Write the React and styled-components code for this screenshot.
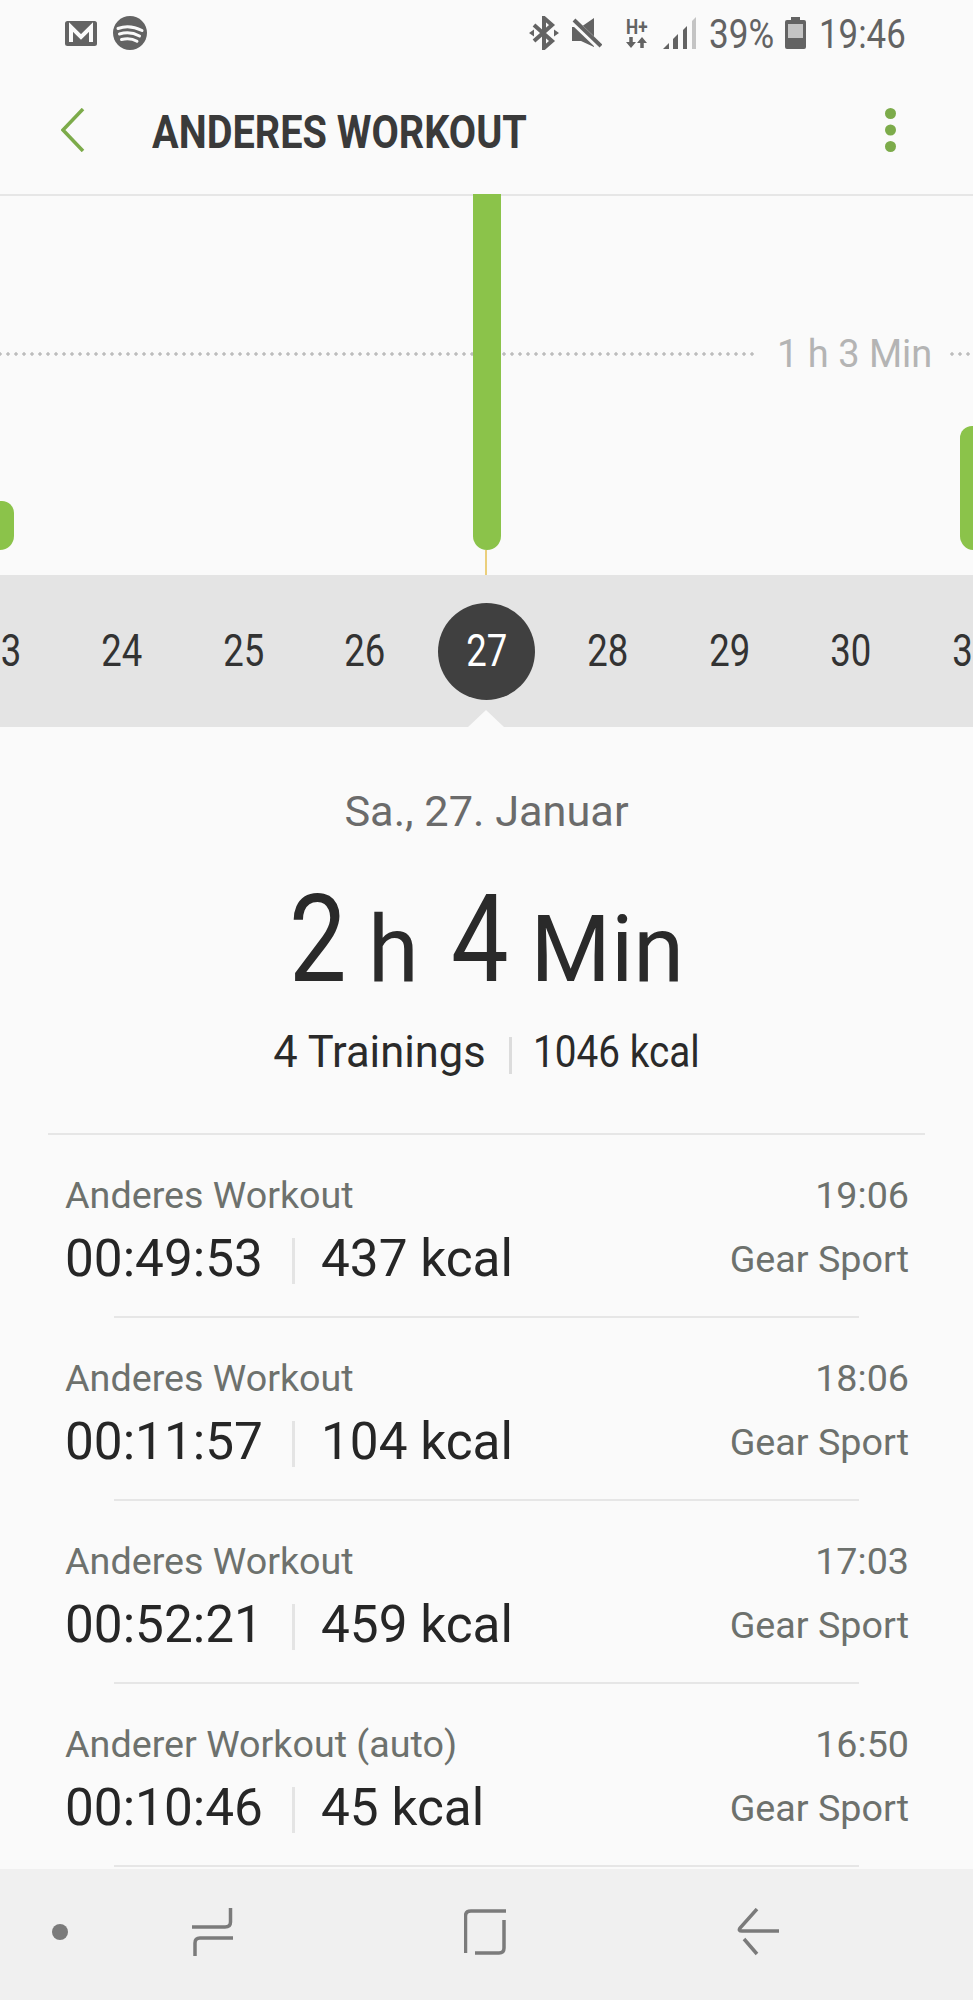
import React from "react";
import styled, { createGlobalStyle } from "styled-components";

const GlobalStyle = createGlobalStyle`
  html, body {
    margin: 0;
    background: #fafafa;
    font-family: Roboto, "Liberation Sans", sans-serif;
  }
  * {
    box-sizing: border-box;
  }
`;

const Page = styled.div`
  width: 973px;
  height: 2000px;
  display: flex;
  flex-direction: column;
  background: #fafafa;
  overflow: hidden;
`;

// Samsung's condensed Roboto is not installed, so text gets squeezed instead
const Squeeze = styled.span`
  display: inline-block;
  white-space: nowrap;
  width: ${p => (p.$w ? `${p.$w}px` : "auto")};
  transform: scaleX(${p => p.$x || 1});
  transform-origin: ${p => p.$origin || "left"} center;
`;

const StatusBar = styled.div`
  height: 66px;
  flex-shrink: 0;
  display: flex;
  align-items: center;
  padding: 0 67px 0 65px;
`;

const Notifications = styled.div`
  display: flex;
  align-items: center;
  gap: 16px;
  margin-right: auto;
`;

const StatusIcons = styled.div`
  display: flex;
  align-items: center;
  gap: 13px;
  color: #636363;
`;

const StatusText = styled.div`
  width: ${p => p.$w}px;
  font-size: 41px;
  line-height: 44px;
  color: #636363;
  margin-top: 2px;
`;

const NetworkSlot = styled.div`
  width: 24px;
  margin-left: 11px;
  display: flex;
  flex-direction: column;
  align-items: flex-start;
  gap: 1px;
`;

const NetworkLabel = styled.div`
  font-size: 20px;
  line-height: 18px;
  font-weight: 700;
  color: #636363;
`;

const Header = styled.div`
  height: 130px;
  flex-shrink: 0;
  display: flex;
  align-items: center;
  padding: 0 77px 0 61px;
  border-bottom: 2px solid #e6e6e6;
`;

const Title = styled.h1`
  margin: 3px auto 0 67px;
  font-size: 47px;
  line-height: 54px;
  font-weight: 700;
  color: #3a3a3a;
`;

const Chart = styled.div`
  position: relative;
  height: 379px;
  flex-shrink: 0;
`;

const Bar = styled.div`
  position: absolute;
  left: ${p => p.$left}px;
  top: ${p => p.$top}px;
  width: 28px;
  bottom: 25px;
  background: #8bc34a;
  border-radius: ${p => (p.$flat ? "0 0 14px 14px" : "12px 12px 14px 14px")};
`;

const Marker = styled.div`
  position: absolute;
  left: 485px;
  bottom: 0;
  width: 2px;
  height: 25px;
  background: #ebcf7c;
`;

const Dotted = styled.div`
  position: absolute;
  left: ${p => p.$left}px;
  width: ${p => p.$width}px;
  top: 156px;
  height: 4px;
  background-image: radial-gradient(circle at center, #bdbdbd 1.4px, transparent 2px);
  background-size: 8px 4px;
  background-position: ${p => p.$phase}px 0;
`;

const GoalLabel = styled.div`
  position: absolute;
  left: 777px;
  top: 133px;
  font-size: 38px;
  line-height: 50px;
  color: #b4b4b4;
`;

const DateStrip = styled.div`
  position: relative;
  height: 152px;
  flex-shrink: 0;
  display: flex;
  justify-content: center;
  align-items: center;
  background: #e4e4e4;
  overflow: hidden;
`;

const Day = styled.div`
  width: 121.5px;
  flex-shrink: 0;
  display: flex;
  justify-content: center;
`;

const Bubble = styled.div`
  width: 97px;
  height: 97px;
  border-radius: 50%;
  display: flex;
  align-items: center;
  justify-content: center;
  font-size: 44px;
  color: ${p => (p.$active ? "#fff" : "#333")};
  background: ${p => (p.$active ? "#404040" : "transparent")};
`;

const Pointer = styled.div`
  position: absolute;
  left: 468px;
  bottom: 0;
  border-left: 18px solid transparent;
  border-right: 18px solid transparent;
  border-bottom: 17px solid #fafafa;
`;

const Summary = styled.div`
  flex-shrink: 0;
  padding-top: 55px;
  text-align: center;
`;

const DateLine = styled.div`
  font-size: 43.3px;
  line-height: 60px;
  color: #6b6b6b;
`;

const Total = styled.div`
  margin-top: 33px;
  height: 130px;
  display: flex;
  justify-content: center;
  align-items: baseline;
  font-size: 122px;
  line-height: 130px;
  color: #2a2a2a;
`;

const Unit = styled.span`
  font-size: 92px;
  line-height: 1;
  margin: ${p => p.$margin};
`;

const Totals = styled.div`
  margin-top: 18px;
  display: flex;
  justify-content: center;
  align-items: center;
  font-size: 43.5px;
  line-height: 60px;
  color: #2a2a2a;
`;

const TotalsRule = styled.div`
  width: 3px;
  height: 37px;
  margin: 5px 21px 0 23px;
  background: #dcdcdc;
`;

const List = styled.div`
  flex: 1;
  margin: 50px 48px 0;
  border-top: 2px solid #e6e6e6;
  overflow: hidden;
`;

const Row = styled.div`
  height: 183px;
  padding-top: 35px;
  display: flex;
  flex-direction: column;
`;

const RowLine = styled.div`
  height: 50px;
  padding: 0 16px 0 17px;
  display: flex;
  align-items: center;
  justify-content: space-between;
`;

const RowGap = styled.div`
  height: 14px;
`;

const Muted = styled.div`
  font-size: 37.7px;
  line-height: 50px;
  color: #6d716d;
`;

const Values = styled.div`
  display: flex;
  align-items: center;
  font-size: 51.3px;
  line-height: 50px;
  color: #262626;
`;

const Duration = styled.div`
  width: 227px;
`;

const ValueRule = styled.div`
  width: 3px;
  height: 46px;
  margin: 4px 26px 0 0;
  background: #e4e4e4;
`;

const RowRule = styled.div`
  height: 2px;
  margin: auto 66px 0;
  background: #e6e6e6;
`;

const NavBar = styled.div`
  height: 131px;
  flex-shrink: 0;
  display: flex;
  align-items: center;
  padding: 0 0 5px 52px;
  background: #f0f0f0;
`;

const NavDot = styled.div`
  width: 16px;
  height: 16px;
  margin-right: 123px;
  border-radius: 50%;
  background: #7b7b7b;
`;

const NavKeys = styled.div`
  display: flex;
  align-items: center;
  gap: 231px;
`;

const GmailIcon = () => (
  <svg width="32" height="25" viewBox="0 0 32 25">
    <rect width="32" height="25" rx="2.500" fill="#636363" />
    <path d="M6 21V6l10 10L26 6v15" fill="none" stroke="#fafafa" strokeWidth="4" />
  </svg>
);

const SpotifyIcon = () => (
  <svg width="34" height="34" viewBox="0 0 34 34">
    <circle cx="17" cy="17" r="17" fill="#636363" />
    <path d="M5 12.500c7-2.500 16-2 24 2M6.500 18c6-1.800 14-1.300 20 2M8.500 23.500c5-1.300 11-.9 15.500 1.800" fill="none" stroke="#fafafa" strokeWidth="3" strokeLinecap="round" />
  </svg>
);

const BluetoothIcon = () => (
  <svg width="30" height="34" viewBox="0 0 30 34">
    <path d="M5 9l18 16-8 7V2l8 7L5 25" fill="none" stroke="#636363" strokeWidth="4" />
    <path d="M0 17l5-3.500v7zM30 17l-5-3.500v7z" fill="#636363" />
  </svg>
);

const MuteIcon = () => (
  <svg width="30" height="30" viewBox="0 0 30 30">
    <path d="M0 9h9L22 0v29L9 23H0z" fill="#636363" />
    <path d="M1 3l27 26" stroke="#fafafa" strokeWidth="7" />
    <path d="M2 2l27 26" stroke="#636363" strokeWidth="4" />
  </svg>
);

const NetworkArrows = () => (
  <svg width="22" height="11" viewBox="0 0 22 11">
    <path d="M5 0v6M16 11V5" stroke="#636363" strokeWidth="3.500" />
    <path d="M0 5h10l-5 6zM11 6h10l-5-6z" fill="#636363" />
  </svg>
);

const SignalIcon = () => (
  <svg width="33" height="32" viewBox="0 0 33 32">
    <path d="M0 32l6-6v6z" fill="#636363" />
    <path d="M10 22l5-5v15h-5z" fill="#636363" />
    <path d="M20 13l4-4v23h-4z" fill="#636363" />
    <path d="M29 4l4-4v32h-4z" fill="#c4c4c4" />
  </svg>
);

const BatteryIcon = () => (
  <svg width="21" height="32" viewBox="0 0 21 32">
    <path d="M2 3h4V0h9v3h4a2 2 0 0 1 2 2v25a2 2 0 0 1-2 2H2a2 2 0 0 1-2-2V5a2 2 0 0 1 2-2z" fill="#636363" />
    <rect x="3" y="7" width="15" height="14" fill="#c4c4c4" />
  </svg>
);

const BackChevron = () => (
  <svg width="24" height="44" viewBox="0 0 24 44">
    <path d="M22 1L2 22l20 21" fill="none" stroke="#7cab4a" strokeWidth="3.500" />
  </svg>
);

const MoreDots = () => (
  <svg width="11" height="44" viewBox="0 0 11 44">
    <circle cx="5.500" cy="5.500" r="5.500" fill="#7cab4a" />
    <circle cx="5.500" cy="22" r="5.500" fill="#7cab4a" />
    <circle cx="5.500" cy="38.500" r="5.500" fill="#7cab4a" />
  </svg>
);

const RecentIcon = () => (
  <svg width="42" height="48" viewBox="0 0 42 48">
    <path d="M39.500 0V14Q39.500 19 34 19H1M42 30H9Q4 30 4 35V48" fill="none" stroke="#7b7b7b" strokeWidth="3.500" />
  </svg>
);

const HomeIcon = () => (
  <svg width="42" height="46" viewBox="0 0 42 46">
    <path d="M1.500 44V7Q1.500 2 7 2H42M40 11V39Q40 44 35 44H11" fill="none" stroke="#7b7b7b" strokeWidth="3.500" />
  </svg>
);

const BackIcon = () => (
  <svg width="42" height="48" viewBox="0 0 42 48">
    <path d="M20 1L3 20Q1 23 5 23H42M7 31L20 46" fill="none" stroke="#7b7b7b" strokeWidth="3.500" />
  </svg>
);

const days = [23, 24, 25, 26, 27, 28, 29, 30, 31];

const workouts = [
  { name: "Anderes Workout", time: "19:06", duration: "00:49:53", kcal: "437 kcal" },
  { name: "Anderes Workout", time: "18:06", duration: "00:11:57", kcal: "104 kcal" },
  { name: "Anderes Workout", time: "17:03", duration: "00:52:21", kcal: "459 kcal" },
  { name: "Anderer Workout (auto)", time: "16:50", duration: "00:10:46", kcal: "45 kcal" },
];

const App = () => (
  <Page>
    <GlobalStyle />
    <StatusBar>
      <Notifications>
        <GmailIcon />
        <SpotifyIcon />
      </Notifications>
      <StatusIcons>
        <BluetoothIcon />
        <MuteIcon />
        <NetworkSlot>
          <NetworkLabel>
            <Squeeze $x={0.86}>H+</Squeeze>
          </NetworkLabel>
          <NetworkArrows />
        </NetworkSlot>
        <SignalIcon />
        <StatusText $w={63}>
          <Squeeze $x={0.855}>39%</Squeeze>
        </StatusText>
        <BatteryIcon />
        <StatusText $w={87}>
          <Squeeze $x={0.85}>19:46</Squeeze>
        </StatusText>
      </StatusIcons>
    </StatusBar>

    <Header>
      <BackChevron />
      <Title>
        <Squeeze $x={0.844}>ANDERES WORKOUT</Squeeze>
      </Title>
      <MoreDots />
    </Header>

    <Chart>
      <Dotted $left={0} $width={754} $phase={4} />
      <Dotted $left={948} $width={25} $phase={0} />
      <GoalLabel>1 h 3 Min</GoalLabel>
      <Bar $left={-14} $top={305} />
      <Bar $left={473} $top={-2} $flat />
      <Bar $left={960} $top={230} />
      <Marker />
    </Chart>

    <DateStrip>
      {days.map(day => (
        <Day key={day}>
          <Bubble $active={day === 27}>
            <Squeeze $x={0.83} $origin="center">{day}</Squeeze>
          </Bubble>
        </Day>
      ))}
      <Pointer />
    </DateStrip>

    <Summary>
      <DateLine>Sa., 27. Januar</DateLine>
      <Total>
        <Squeeze $x={0.84} $w={58}>2</Squeeze>
        <Unit $margin="0 32px 0 21px">h</Unit>
        <Squeeze $x={0.84} $w={58}>4</Squeeze>
        <Unit $margin="0 0 0 22px">Min</Unit>
      </Total>
      <Totals>
        <span>4 Trainings</span>
        <TotalsRule />
        <Squeeze $x={0.89} $w={167}>1046 kcal</Squeeze>
      </Totals>
    </Summary>

    <List>
      {workouts.map(w => (
        <Row key={w.time}>
          <RowLine>
            <Muted>{w.name}</Muted>
            <Muted>{w.time}</Muted>
          </RowLine>
          <RowGap />
          <RowLine>
            <Values>
              <Duration>{w.duration}</Duration>
              <ValueRule />
              <span>{w.kcal}</span>
            </Values>
            <Muted>Gear Sport</Muted>
          </RowLine>
          <RowRule />
        </Row>
      ))}
    </List>

    <NavBar>
      <NavDot />
      <NavKeys>
        <RecentIcon />
        <HomeIcon />
        <BackIcon />
      </NavKeys>
    </NavBar>
  </Page>
);

export default App;
